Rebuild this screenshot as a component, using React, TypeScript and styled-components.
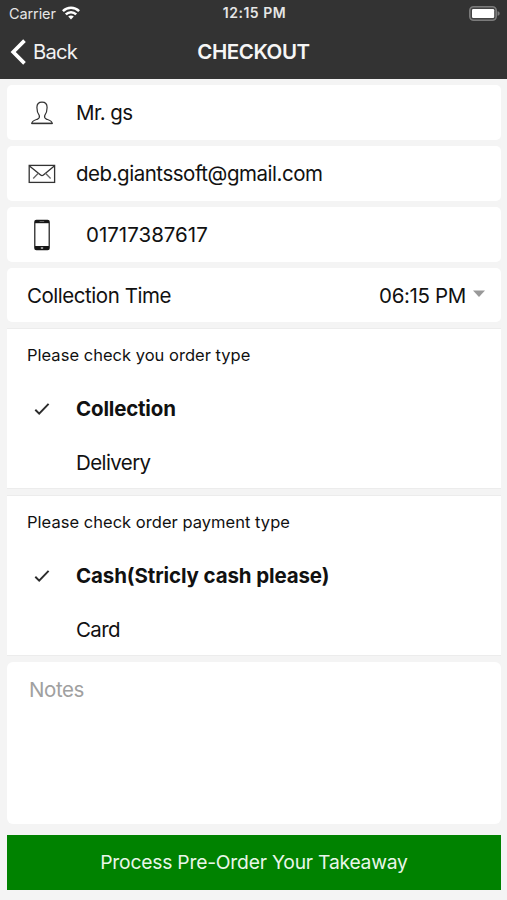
import React from 'react';
import styled, { createGlobalStyle } from 'styled-components';

const GlobalStyle = createGlobalStyle`
  * { box-sizing: border-box; }
  body {
    margin: 0;
    background: #f4f4f4;
    color: #111;
    font-family: Inter, "Liberation Sans", sans-serif;
  }
`;

const Screen = styled.div`
  display: flex;
  flex-direction: column;
  width: 507px;
  height: 900px;
  overflow: hidden;
  background: #f4f4f4;
`;

const Header = styled.header`
  height: 79px;
  flex: none;
  background: #333;
  color: #f6f6f6;
`;

const StatusBar = styled.div`
  display: grid;
  grid-template-columns: 1fr auto 1fr;
  align-items: center;
  height: 27px;
  padding: 0 7px 0 9px;
  color: #e6e6e6;
`;

const Carrier = styled.div`
  display: flex;
  align-items: center;
  gap: 6px;
`;

const BatterySlot = styled.div`
  display: flex;
  justify-content: flex-end;
`;

const NavBar = styled.nav`
  display: grid;
  grid-template-columns: 1fr auto 1fr;
  align-items: center;
  height: 50px;
  padding: 0 10px;
`;

const BackButton = styled.button`
  display: flex;
  align-items: center;
  gap: 6px;
  padding: 0;
  border: 0;
  background: none;
  color: #f2f2f2;
  font-family: inherit;
`;

const Label = styled.span<{ $size?: number; $spacing?: number; $weight?: number }>`
  font-size: ${(p) => p.$size ?? 20.5}px;
  font-weight: ${(p) => p.$weight ?? 400};
  letter-spacing: ${(p) => p.$spacing ?? 0}px;
  line-height: 1.2;
  white-space: nowrap;
`;

const Form = styled.main`
  display: flex;
  flex-direction: column;
  padding: 6px 6px 0 7px;
`;

const FieldCard = styled.div<{ $height?: number }>`
  display: flex;
  align-items: center;
  height: ${(p) => p.$height ?? 55}px;
  margin-bottom: 6px;
  border-radius: 5px;
  background: #fff;

  ${Label} {
    padding-top: 2px;
  }
`;

const IconSlot = styled.div<{ $width?: number }>`
  display: flex;
  flex: none;
  justify-content: center;
  width: ${(p) => p.$width ?? 69}px;
`;

const TimeCard = styled(FieldCard)`
  justify-content: space-between;
  padding: 0 16px 0 20px;
`;

const TimeValue = styled.div`
  display: flex;
  align-items: center;
  gap: 7px;
`;

const OptionGroup = styled.section<{ $height: number }>`
  height: ${(p) => p.$height}px;
  margin-bottom: 6px;
  border-top: 1px solid #ececec;
  border-bottom: 1px solid #ececec;
  background: #fff;
`;

const GroupTitle = styled.div`
  display: flex;
  align-items: center;
  height: 53px;
  padding-left: 20px;
`;

const Option = styled.div`
  display: flex;
  align-items: center;
  height: 54px;
`;

const Notes = styled.div`
  height: 162px;
  padding: 16px 22px;
  border-radius: 6px;
  background: #fff;
  color: #a0a0a0;
`;

const SubmitButton = styled.button`
  height: 55px;
  margin-top: 11px;
  padding: 1px 0 0;
  border: 0;
  background: #008200;
  color: #e9f6e9;
  font-family: inherit;
`;

const WifiIcon = () => (
  <svg width="18" height="14" viewBox="0 0 18 14" fill="none" stroke="#fff" strokeWidth="2.5">
    <path d="M0.9 5.1C5.5 0.6 12.5 0.6 17.1 5.1" />
    <path d="M3.8 8.3C6.8 5.4 11.2 5.4 14.2 8.3" />
    <path d="M9 13.4L6.2 10.6C7.8 9.1 10.2 9.1 11.8 10.6Z" fill="#fff" stroke="none" />
  </svg>
);

const BatteryIcon = () => (
  <svg width="31" height="15" viewBox="0 0 31 15">
    <rect x="0.8" y="0.8" width="26.4" height="13.4" rx="3.8" fill="#444" stroke="#7b7b7b" strokeWidth="1.6" />
    <rect x="3" y="3" width="22.2" height="9" rx="1.2" fill="#fff" />
    <path d="M28.5 5.2C31.4 5.7 31.4 9.3 28.5 9.8Z" fill="#7b7b7b" />
  </svg>
);

const BackIcon = () => (
  <svg width="17" height="26" viewBox="0 0 17 26" fill="none" stroke="#fff" strokeWidth="3.7">
    <path d="M14.5 1.6L3.2 13L14.5 24.4" />
  </svg>
);

const PersonIcon = () => (
  <svg width="24" height="24" viewBox="0 0 24 24" fill="none" stroke="#333" strokeWidth="1.2">
    <path d="M9.2 14.3C7.7 12.3 6.9 9.7 6.9 6.5C6.9 3 8.8 1.2 12 1.2S17.1 3 17.1 6.5C17.1 9.7 16.3 12.3 14.8 14.3C14.2 16.1 14.7 17.5 16.4 18.1C19.4 19.2 22.2 19.8 22.2 22.4H1.8C1.8 19.8 4.6 19.2 7.6 18.1C9.3 17.5 9.8 16.1 9.2 14.3Z" />
    <path d="M1.6 22.5H22.4" strokeWidth="1.4" />
  </svg>
);

const MailIcon = () => (
  <svg width="28" height="20" viewBox="0 0 28 20" fill="none" stroke="#333" strokeWidth="1.3">
    <rect x="1.2" y="1.4" width="25.4" height="17" />
    <path d="M1.5 2L12.6 11.1Q14 12.2 15.4 11.1L26.3 2" />
    <path d="M5.2 14.5L10.3 9.3M22.6 14.5L17.5 9.3" stroke="#666" />
  </svg>
);

const PhoneIcon = () => (
  <svg width="16" height="32" viewBox="0 0 16 32">
    <rect x="0.2" y="0.8" width="15.6" height="30.4" rx="2.2" fill="#161616" />
    <rect x="1.4" y="4.2" width="13.2" height="22.8" fill="#fff" />
    <path d="M5.6 2.5H10.2" stroke="#777" strokeWidth="0.8" />
    <rect x="6.8" y="28" width="2.4" height="2" rx="0.4" fill="#999" />
  </svg>
);

const CheckIcon = () => (
  <svg width="16" height="14" viewBox="0 0 16 14" fill="none" stroke="#2c2c2c" strokeWidth="2">
    <path d="M1.3 7.8L5.2 11.6L14.6 1.9" />
  </svg>
);

const CaretIcon = () => (
  <svg width="12" height="12" viewBox="0 0 12 12">
    <path d="M0 1.5H12L6 8Z" fill="#999" />
  </svg>
);

export default function App() {
  return (
    <>
      <GlobalStyle />
      <Screen>
        <Header>
          <StatusBar>
            <Carrier>
              <Label $size={14.5} $spacing={-0.1}>Carrier</Label>
              <WifiIcon />
            </Carrier>
            <Label $size={14} $weight={600} $spacing={0.5}>12:15 PM</Label>
            <BatterySlot>
              <BatteryIcon />
            </BatterySlot>
          </StatusBar>
          <NavBar>
            <BackButton>
              <BackIcon />
              <Label $size={20.2} $spacing={-0.8}>Back</Label>
            </BackButton>
            <Label $weight={600} $spacing={-0.45}>CHECKOUT</Label>
          </NavBar>
        </Header>
        <Form>
          <FieldCard>
            <IconSlot><PersonIcon /></IconSlot>
            <Label $spacing={-0.6}>Mr. gs</Label>
          </FieldCard>
          <FieldCard>
            <IconSlot><MailIcon /></IconSlot>
            <Label $spacing={-0.47}>deb.giantssoft@gmail.com</Label>
          </FieldCard>
          <FieldCard>
            <IconSlot><PhoneIcon /></IconSlot>
            <IconSlot $width={10} />
            <Label>01717387617</Label>
          </FieldCard>
          <TimeCard $height={54}>
            <Label $spacing={-0.46}>Collection Time</Label>
            <TimeValue>
              <Label $spacing={-0.35}>06:15 PM</Label>
              <CaretIcon />
            </TimeValue>
          </TimeCard>
          <OptionGroup $height={161}>
            <GroupTitle>
              <Label $size={16.5} $spacing={0.02}>Please check you order type</Label>
            </GroupTitle>
            <Option>
              <IconSlot><CheckIcon /></IconSlot>
              <Label $weight={700} $spacing={-0.18}>Collection</Label>
            </Option>
            <Option>
              <IconSlot />
              <Label $spacing={-0.6}>Delivery</Label>
            </Option>
          </OptionGroup>
          <OptionGroup $height={161}>
            <GroupTitle>
              <Label $size={16.5} $spacing={0.03}>Please check order payment type</Label>
            </GroupTitle>
            <Option>
              <IconSlot><CheckIcon /></IconSlot>
              <Label $weight={700} $spacing={-0.12}>Cash(Stricly cash please)</Label>
            </Option>
            <Option>
              <IconSlot />
              <Label $spacing={-0.6}>Card</Label>
            </Option>
          </OptionGroup>
          <Notes>
            <Label $spacing={-0.4}>Notes</Label>
          </Notes>
          <SubmitButton>
            <Label $size={19.3} $spacing={-0.22}>Process Pre-Order Your Takeaway</Label>
          </SubmitButton>
        </Form>
      </Screen>
    </>
  );
}
